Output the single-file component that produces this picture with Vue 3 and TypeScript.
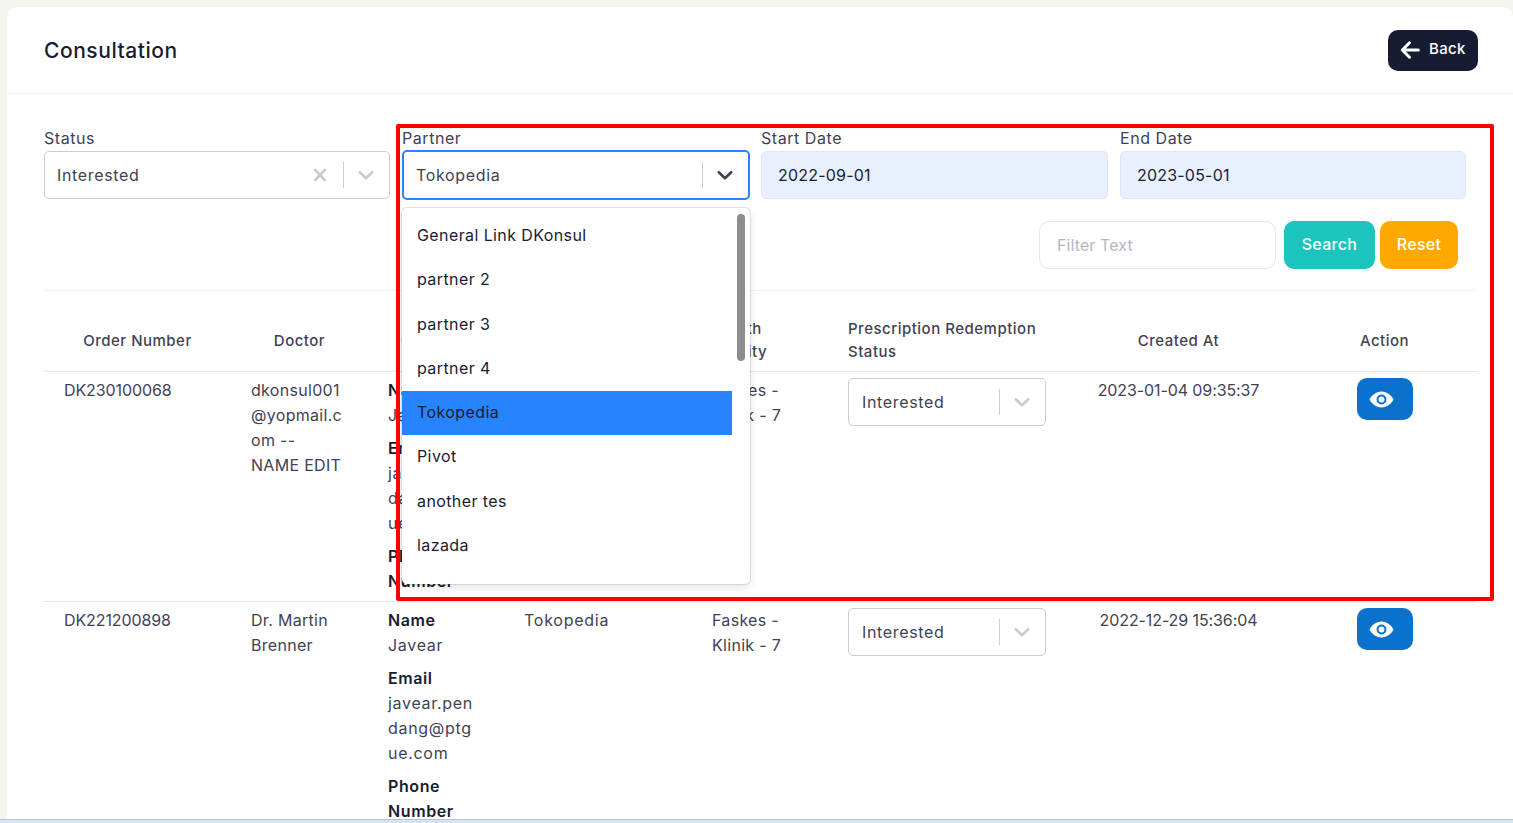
<script setup lang="ts">
type Row = {
  order: string
  doctor: string[]
  partner: string
  faskes: string[]
  status: string
  created: string
}

const partners = ['General Link DKonsul', 'partner 2', 'partner 3', 'partner 4', 'Tokopedia', 'Pivot', 'another tes', 'lazada']

const rows: Row[] = [
  {
    order: 'DK230100068',
    doctor: ['dkonsul001', '@yopmail.c', 'om --', 'NAME EDIT'],
    partner: 'Tokopedia',
    faskes: ['Faskes -', 'Klinik - 7'],
    status: 'Interested',
    created: '2023-01-04 09:35:37',
  },
  {
    order: 'DK221200898',
    doctor: ['Dr. Martin', 'Brenner'],
    partner: 'Tokopedia',
    faskes: ['Faskes -', 'Klinik - 7'],
    status: 'Interested',
    created: '2022-12-29 15:36:04',
  },
]
</script>

<template>
  <div class="page">
    <div class="card">
      <div class="head">
        <h1>Consultation</h1>
        <button class="back" type="button">
          <svg width="20" height="20" viewBox="0 0 20 20" fill="none" stroke="#fff" stroke-width="3" stroke-linecap="round" stroke-linejoin="round">
            <path d="M18.300 10H2.800M9.500 2.800 2.300 10l7.200 7.200" />
          </svg>
          <span>Back</span>
        </button>
      </div>

      <div class="body">
        <div class="filters">
          <div class="field">
            <label>Status</label>
            <div class="select">
              <span class="value">Interested</span>
              <svg class="x" width="20" height="20" viewBox="0 0 20 20"><path d="M5.200 5 14.800 15M14.800 5 5.200 15" /></svg>
              <i class="sep"></i>
              <svg class="chev" width="20" height="20" viewBox="0 0 20 20"><path d="M3.800 7.200 10 13.200l6.200-6" /></svg>
            </div>
          </div>

          <div class="field partner">
            <label>Partner</label>
            <div class="select open">
              <span class="value">Tokopedia</span>
              <i class="sep"></i>
              <svg class="chev" width="20" height="20" viewBox="0 0 20 20"><path d="M3.800 7.200 10 13.200l6.200-6" /></svg>
            </div>
            <div class="menu">
              <div class="menu-list">
                <div v-for="p in partners" :key="p" class="option" :class="{ active: p === 'Tokopedia' }">{{ p }}</div>
              </div>
              <div class="scroll"><b></b></div>
            </div>
          </div>

          <div class="field">
            <label>Start Date</label>
            <div class="date">2022-09-01</div>
          </div>

          <div class="field">
            <label>End Date</label>
            <div class="date">2023-05-01</div>
          </div>
        </div>

        <div class="search-row">
          <input class="filter" placeholder="Filter Text" />
          <button class="btn search" type="button"><span>Search</span></button>
          <button class="btn reset" type="button"><span>Reset</span></button>
        </div>

        <table>
          <colgroup>
            <col style="width: 187px" />
            <col style="width: 137px" />
            <col style="width: 136px" />
            <col style="width: 188px" />
            <col style="width: 136px" />
            <col style="width: 238px" />
            <col style="width: 225px" />
            <col style="width: 187px" />
          </colgroup>
          <thead>
            <tr>
              <th class="c">Order Number</th>
              <th class="c">Doctor</th>
              <th class="c narrow">Customer</th>
              <th class="c">Partner</th>
              <th>Health<br />Facility</th>
              <th>Prescription Redemption<br />Status</th>
              <th class="c">Created At</th>
              <th class="c">Action</th>
            </tr>
          </thead>
          <tbody>
            <tr v-for="r in rows" :key="r.order">
              <td class="tight">{{ r.order }}</td>
              <td><div v-for="l in r.doctor" :key="l">{{ l }}</div></td>
              <td>
                <div class="customer">
                  <strong>Name</strong>
                  <div>Javear</div>
                  <strong class="gap">Email</strong>
                  <div>javear.pen</div>
                  <div>dang@ptg</div>
                  <div>ue.com</div>
                  <strong class="gap">Phone</strong>
                  <strong>Number</strong>
                </div>
              </td>
              <td class="wide">{{ r.partner }}</td>
              <td><div v-for="l in r.faskes" :key="l">{{ l }}</div></td>
              <td>
                <div class="select small">
                  <span class="value">{{ r.status }}</span>
                  <i class="sep"></i>
                  <svg class="chev" width="20" height="20" viewBox="0 0 20 20"><path d="M3.800 7.200 10 13.200l6.200-6" /></svg>
                </div>
              </td>
              <td class="c tight">{{ r.created }}</td>
              <td class="c">
                <button class="eye" type="button">
                  <svg width="27" height="27" viewBox="0 0 24 24">
                    <path fill="#fff" fill-rule="evenodd" d="M12 4.900c-4.900 0-8.900 3.400-10.700 7.100 1.800 3.700 5.800 7.100 10.700 7.100s8.900-3.400 10.700-7.100C20.900 8.300 16.900 4.900 12 4.900zM12 7.600a4.400 4.400 0 1 1 0 8.800 4.400 4.400 0 0 1 0-8.800z" />
                    <circle cx="12" cy="12" r="2.600" fill="#fff" />
                  </svg>
                </button>
              </td>
            </tr>
          </tbody>
        </table>
      </div>
    </div>

    <div class="highlight"></div>
    <div class="strip"></div>
  </div>
</template>

<style>
html,
body {
  margin: 0;
  overflow: hidden;
}
</style>

<style scoped>
.page {
  position: relative;
  height: 823px;
  overflow: hidden;
  padding: 7px 0 0 7px;
  box-sizing: border-box;
  background: #f7f3ee;
  font-family: Inter, "Open Sans", sans-serif;
  font-size: 16px;
  color: #3f4254;
}
.card {
  background: #fff;
  border-radius: 10px;
  height: 900px;
}
.head {
  display: flex;
  align-items: center;
  justify-content: space-between;
  height: 86px;
  padding: 0 35px 0 37px;
  border-bottom: 1px solid #eff2f5;
}
h1 {
  margin: 0;
  font-size: 21px;
  font-weight: 500;
  color: #181c32;
  letter-spacing: 0.55px;
}
.back {
  display: flex;
  align-items: center;
  gap: 9px;
  width: 90px;
  height: 41px;
  padding: 0 0 0 12px;
  border: 0;
  border-radius: 10px;
  background: #181c32;
  color: #fff;
  font: 500 15px Inter, sans-serif;
  letter-spacing: 0.3px;
}
.back span {
  padding-bottom: 3px;
}
.body {
  padding: 34px 35px 0 37px;
}
.filters {
  display: grid;
  grid-template-columns: 346px 347px 347px 346px;
  column-gap: 12px;
}
.field label {
  display: block;
  height: 21px;
  line-height: 20px;
  margin-bottom: 2px;
  font-size: 16px;
  color: #3f4254;
  letter-spacing: 0.55px;
}
.field {
  position: relative;
}
.select {
  display: flex;
  align-items: center;
  box-sizing: border-box;
  height: 48px;
  padding: 0 13px 0 12px;
  border: 1px solid #ccc;
  border-radius: 5px;
  background: #fff;
  letter-spacing: 0.65px;
}
.select .value {
  flex: 1;
}
.x,
.chev {
  fill: none;
  stroke: #ccc;
  stroke-width: 2.6;
  stroke-linecap: round;
  stroke-linejoin: round;
  flex: none;
}
.sep {
  width: 1px;
  height: 26px;
  margin: 0 12px 0 13px;
  background: #ccc;
  flex: none;
}
.open {
  height: 50px;
  margin: -1px -1px 0 0;
  border: 2px solid #2684ff;
  padding-left: 12px;
}
.open .chev {
  stroke: #3f4254;
}
.menu {
  position: absolute;
  z-index: 3;
  left: 0;
  right: -1px;
  top: 80px;
  height: 376px;
  display: flex;
  background: #fff;
  border-radius: 5px;
  box-shadow: 0 0 0 1px rgba(0, 0, 0, 0.1), 0 4px 11px rgba(0, 0, 0, 0.1);
  overflow: hidden;
}
.menu-list {
  flex: 1;
  padding-top: 6px;
}
.option {
  height: 44.3px;
  line-height: 42px;
  padding-left: 15px;
  color: #181c32;
  letter-spacing: 0.4px;
}
.option.active {
  background: #2684ff;
}
.scroll {
  width: 18px;
  padding-top: 6px;
  flex: none;
}
.scroll b {
  display: block;
  width: 8px;
  height: 147px;
  margin-left: 5px;
  border-radius: 4px;
  background: #8d8d8d;
}
.date {
  box-sizing: border-box;
  height: 48px;
  line-height: 47px;
  padding-left: 16px;
  border: 1px solid #e4e6ef;
  border-radius: 5px;
  background: #e8f0fe;
  color: #181c32;
  letter-spacing: 0.2px;
}
.search-row {
  display: flex;
  justify-content: flex-end;
  gap: 5px;
  margin: 21px 20px 0 0;
  padding-bottom: 21px;
}
.filter {
  box-sizing: border-box;
  width: 237px;
  height: 48px;
  margin-right: 3px;
  padding: 0 17px;
  border: 1px solid #e4e6ef;
  border-radius: 10px;
  font: 16px Inter, sans-serif;
  letter-spacing: 0.1px;
  outline: none;
}
.filter::placeholder {
  color: #b5b5c3;
}
.btn {
  height: 48px;
  border: 0;
  border-radius: 10px;
  color: #fff;
  font: 500 16px Inter, sans-serif;
  letter-spacing: 0.3px;
  padding: 0 0 3px;
}
.search {
  width: 91px;
  background: #1bc5bd;
}
.reset {
  width: 78px;
  background: #ffa800;
}
table {
  width: 1434px;
  table-layout: fixed;
  border-collapse: collapse;
  border-top: 1px solid #eff2f5;
}
th {
  height: 81px;
  padding: 18px 20px 0;
  box-sizing: border-box;
  text-align: left;
  font-size: 15px;
  font-weight: 500;
  line-height: 23px;
  color: #3f4254;
  letter-spacing: 0.5px;
  border-bottom: 1px solid #e4e6ef;
  white-space: nowrap;
}
th.narrow {
  letter-spacing: 0;
}
td {
  padding: 6px 20px 7px;
  vertical-align: top;
  line-height: 25px;
  letter-spacing: 0.3px;
  border-bottom: 1px solid #e4e6ef;
  white-space: nowrap;
}
td.tight {
  letter-spacing: -0.1px;
}
td.wide {
  letter-spacing: 0.75px;
}
th.c,
td.c {
  text-align: center;
}
.customer {
  letter-spacing: 0.7px;
}
.customer strong {
  display: block;
  font-weight: 600;
  color: #181c32;
  letter-spacing: 0.6px;
}
.customer .gap {
  margin-top: 8px;
}
.small {
  width: 198px;
  padding-left: 13px;
}
.small .value {
  color: #3f4254;
}
.eye {
  display: flex;
  align-items: center;
  justify-content: center;
  width: 56px;
  height: 42px;
  margin: 0 auto;
  padding: 0 6px 0 0;
  border: 0;
  border-radius: 10px;
  background: #0a71cd;
}
.highlight {
  position: absolute;
  left: 396px;
  top: 124px;
  width: 1098px;
  height: 477px;
  box-sizing: border-box;
  border: 4px solid #f00;
  border-radius: 2px;
  z-index: 4;
  pointer-events: none;
}
.strip {
  position: absolute;
  left: 0;
  right: 0;
  bottom: 0;
  height: 4px;
  background: #d5e3f5;
  border-top: 1px solid #b4c5dc;
  box-sizing: border-box;
  z-index: 5;
}
</style>
